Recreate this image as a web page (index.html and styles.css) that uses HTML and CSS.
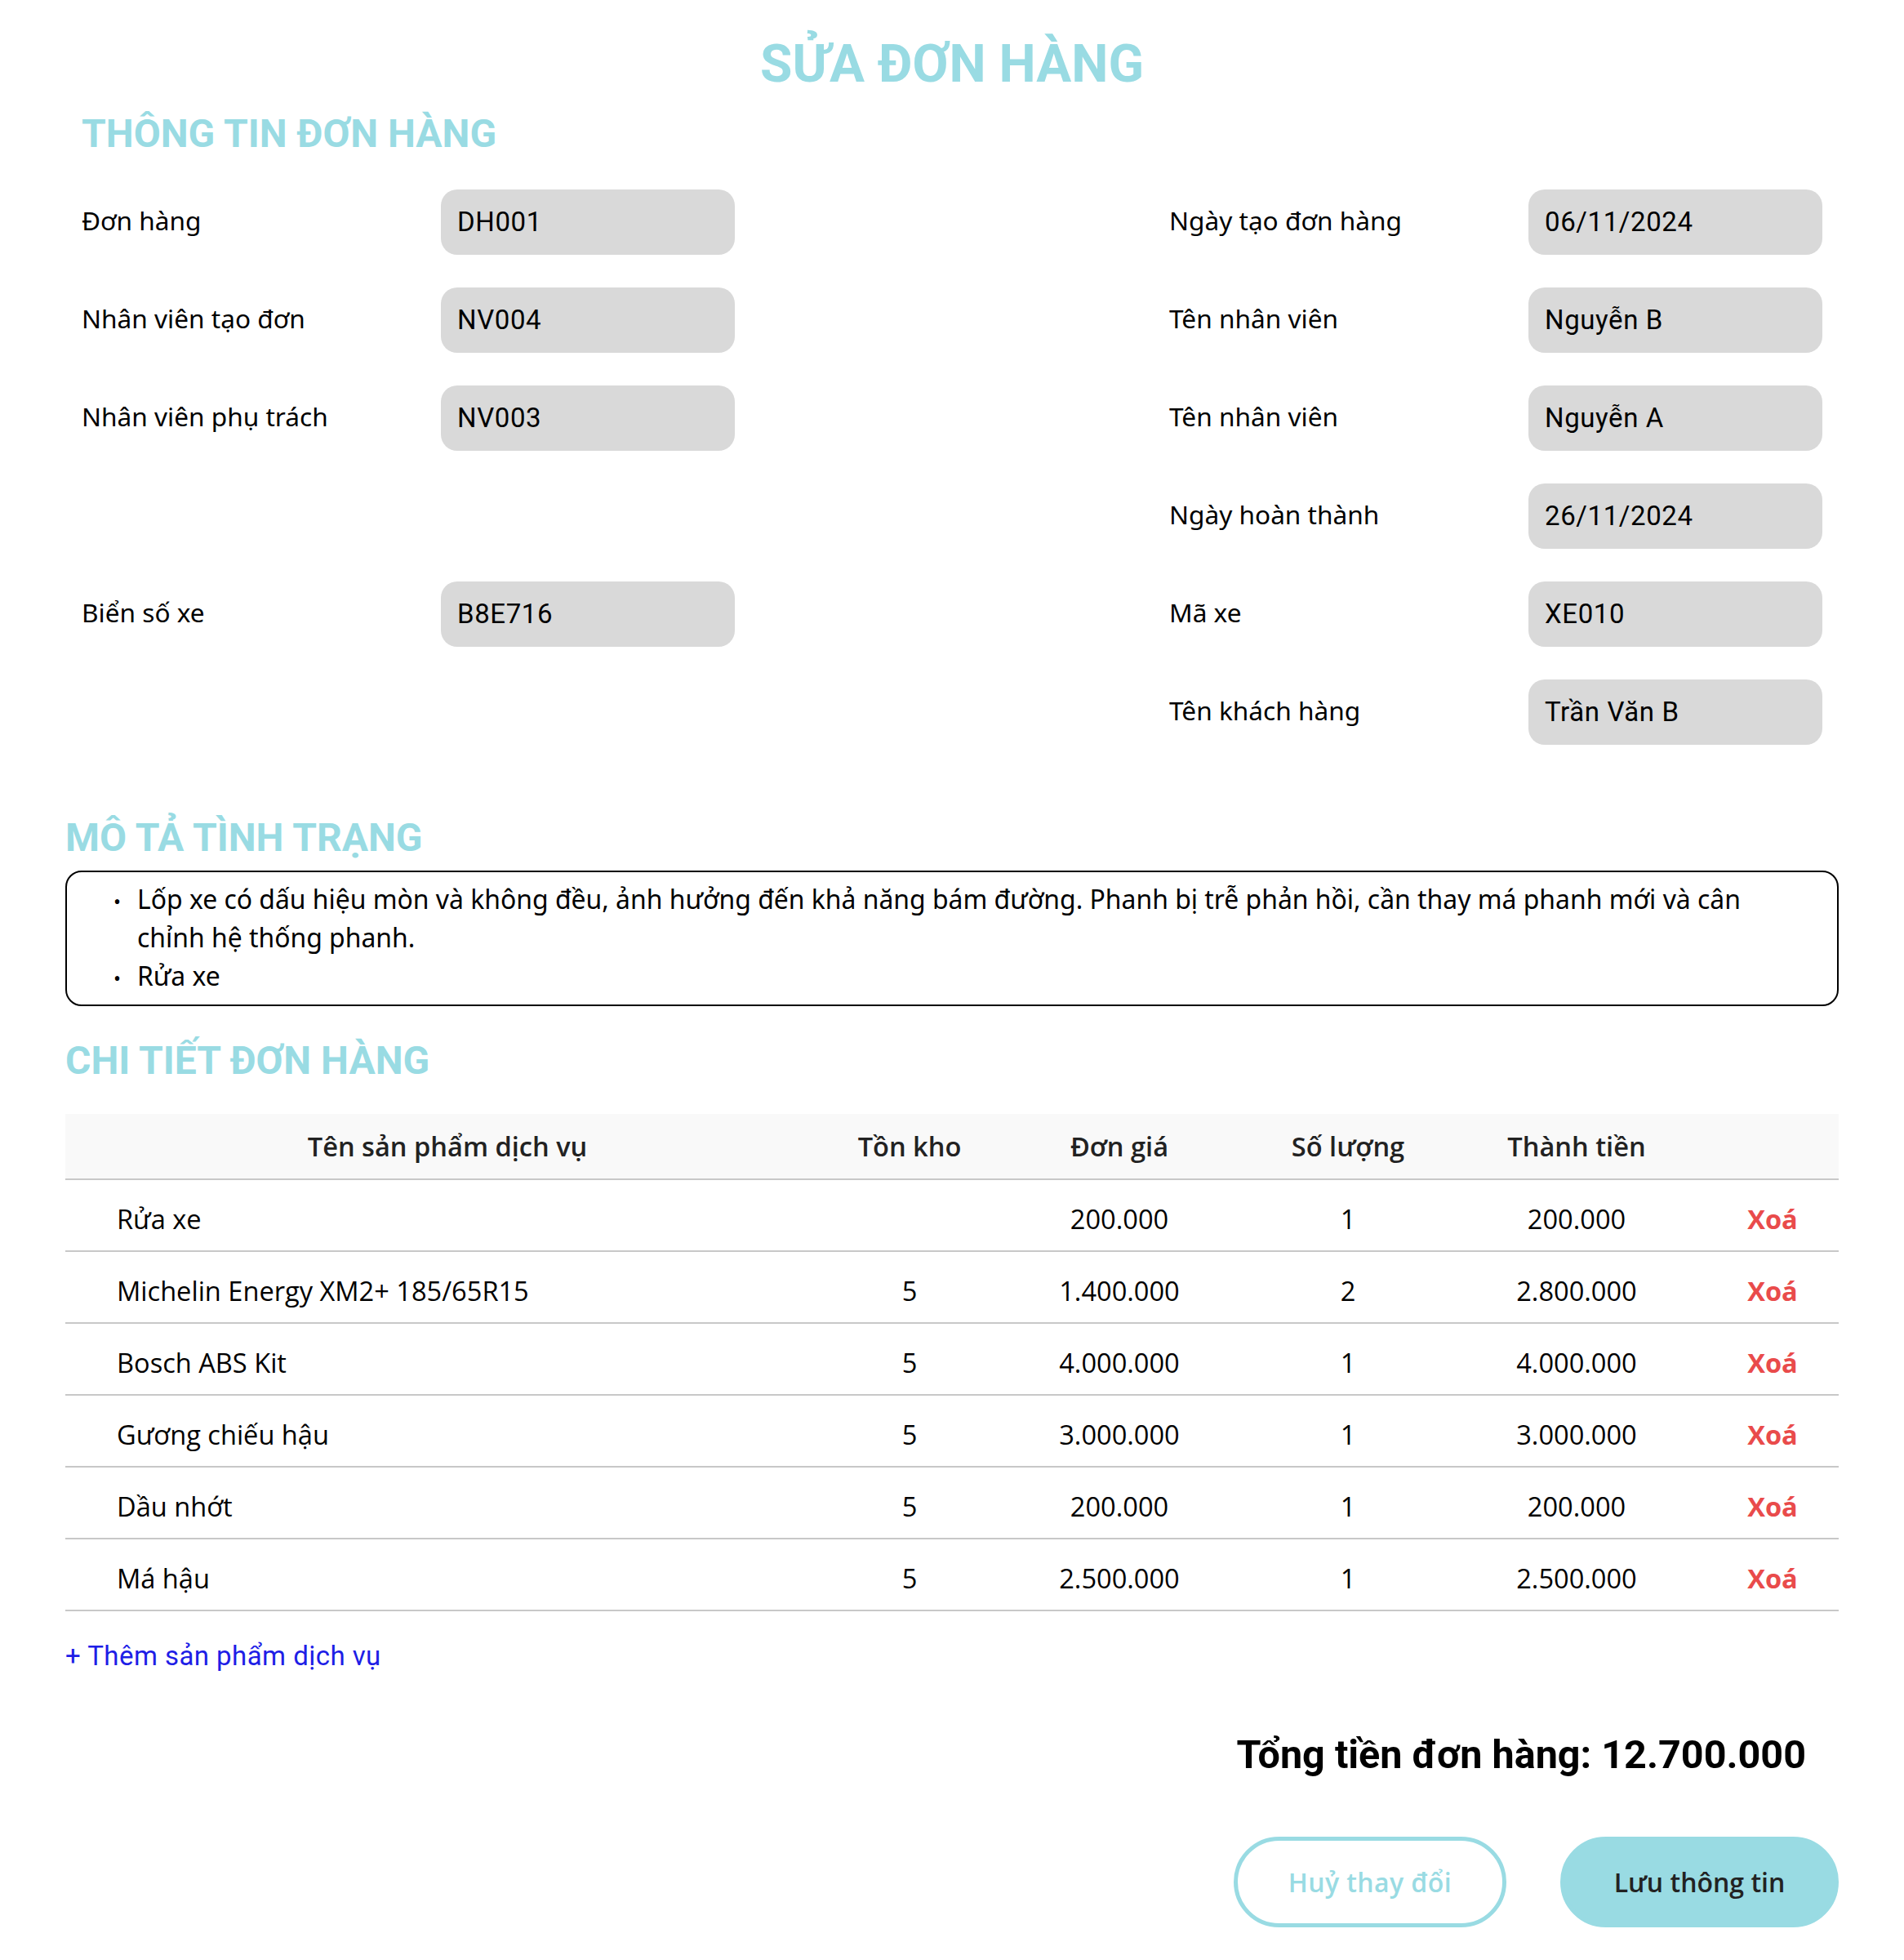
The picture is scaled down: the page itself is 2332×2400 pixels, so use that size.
FILE: index.html
```html
<!DOCTYPE html>
<html lang="vi">
<head>
<meta charset="utf-8">
<title>Sửa đơn hàng</title>
<link rel="stylesheet" href="styles.css">
</head>
<body>
<main class="page">
  <h1 class="page-title">SỬA ĐƠN HÀNG</h1>

  <section class="info">
    <h2 class="section-title info-title">THÔNG TIN ĐƠN HÀNG</h2>
    <div class="form-grid">
      <div class="field"><span class="label">Đơn hàng</span><span class="value">DH001</span></div>
      <div class="field"><span class="label">Ngày tạo đơn hàng</span><span class="value">06/11/2024</span></div>

      <div class="field"><span class="label">Nhân viên tạo đơn</span><span class="value">NV004</span></div>
      <div class="field"><span class="label">Tên nhân viên</span><span class="value">Nguyễn B</span></div>

      <div class="field"><span class="label">Nhân viên phụ trách</span><span class="value">NV003</span></div>
      <div class="field"><span class="label">Tên nhân viên</span><span class="value">Nguyễn A</span></div>

      <div class="field empty"></div>
      <div class="field"><span class="label">Ngày hoàn thành</span><span class="value">26/11/2024</span></div>

      <div class="field"><span class="label">Biển số xe</span><span class="value">B8E716</span></div>
      <div class="field"><span class="label">Mã xe</span><span class="value">XE010</span></div>

      <div class="field empty"></div>
      <div class="field"><span class="label">Tên khách hàng</span><span class="value">Trần Văn B</span></div>
    </div>
  </section>

  <section class="status">
    <h2 class="section-title status-title">MÔ TẢ TÌNH TRẠNG</h2>
    <div class="status-box">
      <ul class="status-list">
        <li>Lốp xe có dấu hiệu mòn và không đều, ảnh hưởng đến khả năng bám đường. Phanh bị trễ phản hồi, cần thay má phanh mới và cân chỉnh hệ thống phanh.</li>
        <li>Rửa xe</li>
      </ul>
    </div>
  </section>

  <section class="details">
    <h2 class="section-title details-title">CHI TIẾT ĐƠN HÀNG</h2>
    <table class="items">
      <colgroup>
        <col class="c-name"><col class="c-stock"><col class="c-price"><col class="c-qty"><col class="c-total"><col class="c-act">
      </colgroup>
      <thead>
        <tr><th>Tên sản phẩm dịch vụ</th><th>Tồn kho</th><th>Đơn giá</th><th>Số lượng</th><th>Thành tiền</th><th></th></tr>
      </thead>
      <tbody>
        <tr><td class="name">Rửa xe</td><td></td><td>200.000</td><td>1</td><td>200.000</td><td class="del">Xoá</td></tr>
        <tr><td class="name">Michelin Energy XM2+ 185/65R15</td><td>5</td><td>1.400.000</td><td>2</td><td>2.800.000</td><td class="del">Xoá</td></tr>
        <tr><td class="name">Bosch ABS Kit</td><td>5</td><td>4.000.000</td><td>1</td><td>4.000.000</td><td class="del">Xoá</td></tr>
        <tr><td class="name">Gương chiếu hậu</td><td>5</td><td>3.000.000</td><td>1</td><td>3.000.000</td><td class="del">Xoá</td></tr>
        <tr><td class="name">Dầu nhớt</td><td>5</td><td>200.000</td><td>1</td><td>200.000</td><td class="del">Xoá</td></tr>
        <tr><td class="name">Má hậu</td><td>5</td><td>2.500.000</td><td>1</td><td>2.500.000</td><td class="del">Xoá</td></tr>
      </tbody>
    </table>
    <a class="add-link" href="#">+ Thêm sản phẩm dịch vụ</a>
  </section>

  <div class="total">Tổng tiền đơn hàng: 12.700.000</div>

  <div class="actions">
    <button class="btn btn-outline" type="button">Huỷ thay đổi</button>
    <button class="btn btn-fill" type="button">Lưu thông tin</button>
  </div>
</main>
</body>
</html>
```

FILE: styles.css
```css
* { box-sizing: border-box; }

html, body {
  margin: 0;
  padding: 0;
  background: #ffffff;
}

body {
  font-family: "Roboto", "Liberation Sans", sans-serif;
  color: #000;
}

.page {
  padding: 41px 80px 0 80px;
  display: flex;
  flex-direction: column;
}

.page-title {
  margin: 0;
  font-family: "Roboto", sans-serif;
  font-weight: 700;
  font-size: 64px;
  line-height: 75px;
  color: #99dbe3;
  text-align: center;
}

.section-title {
  margin: 0;
  font-family: "Roboto", sans-serif;
  font-weight: 700;
  font-size: 48px;
  line-height: 56px;
  color: #99dbe3;
}

/* ---------- info ---------- */
.info {
  padding: 0 20px;
}

.info-title {
  margin-top: 20px;
}

.form-grid {
  margin-top: 40px;
  display: grid;
  grid-template-columns: 800px 800px;
  justify-content: space-between;
  row-gap: 40px;
}

.field {
  display: flex;
  align-items: center;
  height: 80px;
}

.label {
  width: 440px;
  flex: none;
  margin-bottom: 6px;
  font-family: "Noto Sans", sans-serif;
  font-size: 31.6px;
  color: #000;
}

.value {
  width: 360px;
  height: 80px;
  flex: none;
  display: flex;
  align-items: center;
  padding-left: 20px;
  padding-bottom: 2px;
  background: #d9d9d9;
  border-radius: 20px;
  font-family: "Roboto", sans-serif;
  font-size: 33px;
  letter-spacing: 0.6px;
  color: #000;
}

/* ---------- status ---------- */
.status-title {
  margin-top: 86px;
}

.status-box {
  margin-top: 12px;
  border: 2px solid #000;
  border-radius: 20px;
  padding: 9px 60px 12px 0;
}

.status-list {
  margin: 0;
  padding-left: 86px;
  list-style: none;
  font-family: "Noto Sans", sans-serif;
  font-size: 31.9px;
  line-height: 47px;
}

.status-list li::before {
  content: "•";
  display: inline-block;
  width: 29px;
  margin-left: -29px;
  font-size: 24px;
  line-height: 1;
}

/* ---------- details ---------- */
.details-title {
  margin-top: 39px;
}

.items {
  margin-top: 37px;
  width: 100%;
  border-collapse: collapse;
  table-layout: fixed;
  font-family: "Open Sans", sans-serif;
  font-size: 32.6px;
  color: #000;
}

.c-name { width: 936px; }
.c-stock { width: 196px; }
.c-price { width: 318px; }
.c-qty { width: 242px; }
.c-total { width: 318px; }
.c-act { width: 162px; }

.items thead tr {
  background: #f9f9f9;
  height: 80px;
}

.items th {
  font-weight: 600;
  color: #222;
  text-align: center;
  border-bottom: 2px solid #c8c8c8;
  padding: 0;
}

.items tbody tr {
  height: 88px;
}

.items td {
  text-align: center;
  border-bottom: 2px solid #c8c8c8;
  padding: 8px 0 0 0;
}

.items td.name {
  text-align: left;
  padding-left: 63px;
}

.items td.del {
  color: #e94b4b;
  font-weight: 700;
}

.details {
  display: flex;
  flex-direction: column;
}

.add-link {
  margin-top: 36px;
  align-self: flex-start;
  display: block;
  font-family: "Roboto", sans-serif;
  font-size: 33px;
  line-height: 38px;
  color: #1e1ee6;
  text-decoration: none;
  letter-spacing: 0.45px;
}

/* ---------- total ---------- */
.total {
  margin-top: 74px;
  text-align: right;
  padding-right: 40px;
  font-family: "Roboto", sans-serif;
  font-weight: 700;
  font-size: 48.5px;
  line-height: 56px;
  color: #000;
}

/* ---------- actions ---------- */
.actions {
  margin-top: 72px;
  display: flex;
  justify-content: flex-end;
  gap: 66px;
}

.btn {
  height: 111px;
  border: 5px solid #99dbe3;
  border-radius: 56px;
  font-family: "Open Sans", sans-serif;
  font-weight: 600;
  font-size: 32px;
  display: inline-flex;
  align-items: center;
  justify-content: center;
  cursor: pointer;
}

.btn-outline {
  width: 334px;
  background: #ffffff;
  color: #99dbe3;
  letter-spacing: 0.4px;
}

.btn-fill {
  width: 341px;
  background: #99dbe3;
  color: #222;
}
```
